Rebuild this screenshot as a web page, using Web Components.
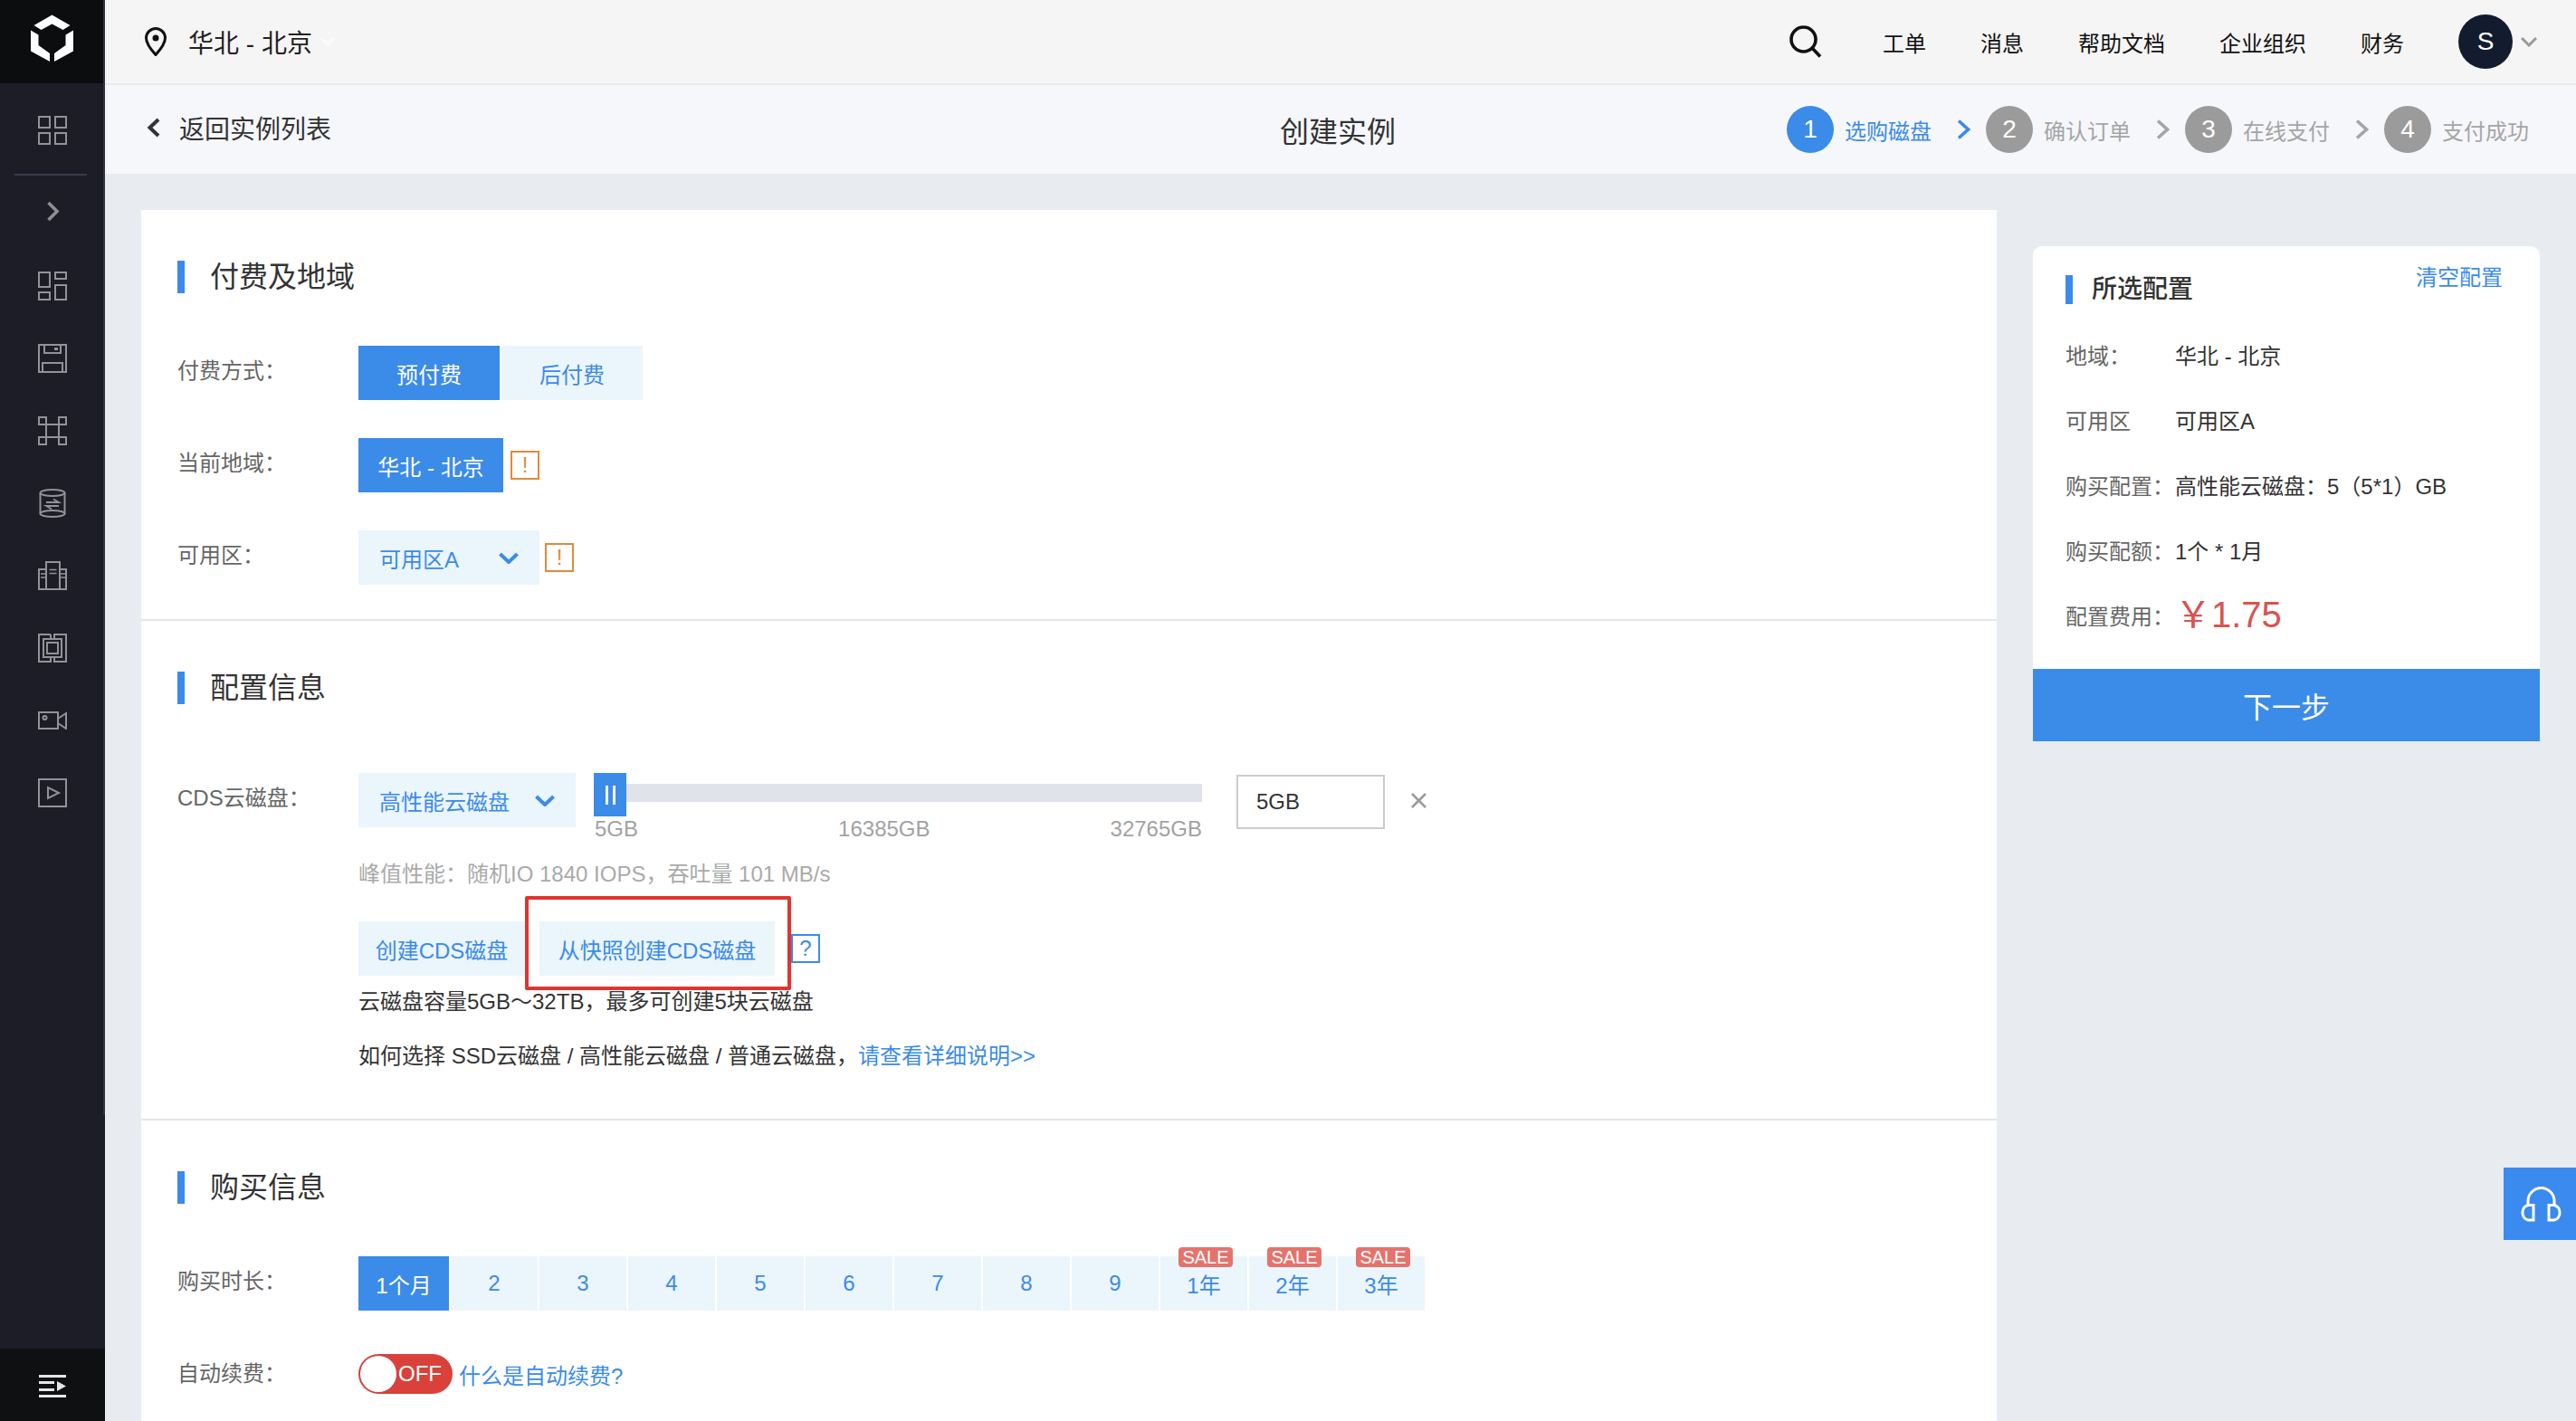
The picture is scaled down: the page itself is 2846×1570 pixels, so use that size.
<!DOCTYPE html>
<html lang="zh-CN">
<head>
<meta charset="utf-8">
<title>创建实例</title>
<style>
html,body{margin:0;padding:0;height:100%;overflow:hidden;background:#e8ebf0;}
body{font-family:"Liberation Sans","Noto Sans CJK SC",sans-serif;font-size:24px;color:#333;}
</style>
</head>
<body>
<app-shell>
  <side-bar slot="side"></side-bar>
  <top-bar slot="top"></top-bar>
  <sub-header slot="sub">
    <step-item n="1" active></step-item>
  </sub-header>
  <div slot="main" style="flex:none;width:2050px">
    <form-section heading="付费及地域" gap="58" pad="38">
      <form-row label="付费方式：">
        <seg-btn active w="156">预付费</seg-btn><seg-btn w="156" ml="2">后付费</seg-btn>
      </form-row>
      <form-row label="当前地域：" mt="42">
        <seg-btn active w="160">华北 - 北京</seg-btn><hint-box ml="8">!</hint-box>
      </form-row>
      <form-row label="可用区：" mt="42">
        <drop-select w="200">可用区A</drop-select><hint-box ml="6">!</hint-box>
      </form-row>
    </form-section>
    <form-section heading="配置信息" gap="76" pad="51" line>
      <form-row label="CDS云磁盘：">
        <disk-panel></disk-panel>
      </form-row>
    </form-section>
    <form-section heading="购买信息" gap="58" pad="60" line>
      <form-row label="购买时长：">
        <term-item active w="100">1个月</term-item>
        <term-item>2</term-item><term-item>3</term-item><term-item>4</term-item><term-item>5</term-item>
        <term-item>6</term-item><term-item>7</term-item><term-item>8</term-item><term-item>9</term-item>
        <term-item sale>1年</term-item><term-item sale>2年</term-item><term-item sale>3年</term-item>
      </form-row>
      <form-row label="自动续费：" mt="48" lh="44">
        <on-off></on-off><text-link ml="7">什么是自动续费?</text-link>
      </form-row>
    </form-section>
  </div>
  <order-summary slot="main"></order-summary>
</app-shell>
<help-float></help-float>

<script>
const BLUE='#3b8be8', PALE='#ebf5fc';
function def(name,render){
  customElements.define(name,class extends HTMLElement{
    connectedCallback(){
      if(this.shadowRoot) return;
      this.attachShadow({mode:'open'}).innerHTML=render(this);
    }
  });
}
const chev=(d,w,h,c,sw)=>`<svg width="${w}" height="${h}" viewBox="0 0 ${w} ${h}" fill="none" stroke="${c}" stroke-width="${sw}">${d}</svg>`;

def('app-shell',()=>`<style>
:host{display:flex;height:1570px;overflow:hidden}
.r{flex:1;min-width:0;display:flex;flex-direction:column}
.m{display:flex;gap:40px;padding:40px 40px 0;align-items:flex-start}
</style>
<slot name="side"></slot>
<div class="r"><slot name="top"></slot><slot name="sub"></slot><div class="m"><slot name="main"></slot></div></div>`);

const S='fill="none" stroke="#929397" stroke-width="2"';
const ic=(b,h=32)=>`<svg width="32" height="${h}" viewBox="0 0 32 ${h}" ${S}>${b}</svg>`;
def('side-bar',()=>`<style>
:host{display:flex;flex-direction:column;flex:none;width:116px;height:1570px;background:#1c1d27;position:relative}
.logo{height:92px;background:#0c0d0f;display:block;flex:none}
.it{height:80px;display:flex;align-items:center;justify-content:center;flex:none}
.first{margin-top:36px;height:32px}
.div{height:2px;margin:32px 20px 0 16px;background:#393a49;flex:none}
.ch{height:78px;margin-bottom:4px}
.sp{flex:1}
.bot{height:80px;background:#0f1012;display:flex;align-items:center;justify-content:center;flex:none;padding-top:2px;box-sizing:border-box}
.bar{position:absolute;right:0;top:0;width:2px;height:1232px;background:#32333f}
svg{display:block}
</style>
<svg class="logo" width="116" height="92" viewBox="0 0 116 92"><g fill="#fff">
<polygon points="57.5,16.5 77.5,28 69.5,33 57.5,26.5 45.5,33 37.5,28"/>
<polygon points="34,33.5 42.5,38.5 42.5,50 55,59 55,68 34,56.5"/>
<polygon points="81,33.5 72.5,38.5 72.5,50 60,59 60,68 81,56.5"/></g></svg>
<div class="it first">${ic('<rect x="1" y="1" width="12" height="12"/><rect x="19" y="1" width="12" height="12"/><rect x="1" y="19" width="12" height="12"/><rect x="19" y="19" width="12" height="12"/>')}</div>
<div class="div"></div>
<div class="it ch">${chev('<path d="M2.5 2 L12 11.5 L2.5 21"/>',15,23,'#8e8f93',3.6)}</div>
<div class="it">${ic('<rect x="1" y="1" width="12" height="16"/><rect x="19" y="1" width="12" height="7"/><rect x="1" y="23" width="12" height="8"/><rect x="19" y="15" width="12" height="16"/>')}</div>
<div class="it">${ic('<rect x="1" y="1" width="30" height="30"/><path d="M7 1V10H25V1"/><rect x="18" y="4" width="4" height="3" fill="#929397" stroke="none"/><path d="M5 31V21H27V31"/>')}</div>
<div class="it">${ic('<rect x="1" y="1" width="8" height="8"/><rect x="23" y="1" width="8" height="8"/><rect x="1" y="23" width="8" height="8"/><rect x="23" y="23" width="8" height="8"/><rect x="9" y="9" width="14" height="14"/>')}</div>
<div class="it">${ic('<ellipse cx="16" cy="4.5" rx="13.5" ry="3.5"/><ellipse cx="16" cy="27.5" rx="13.5" ry="3.5"/><path d="M2.5 4.5V27.5M29.5 4.5V27.5"/><path d="M9 15H23L17 11.5M23 19H9L15 22.5" stroke-width="1.8"/>')}</div>
<div class="it">${ic('<path d="M9 31V1H24V31ZM9 9H1V31H31V9H24"/><path d="M12.5 9.5H20.5M12.5 13.5H20.5M3 14H9M3 18H9M24 14H30M24 18H30" stroke-width="1.6"/>')}</div>
<div class="it">${ic('<path d="M14 1H1V31H14V26M18 26V31H31V1H18V6M14 1V6"/><rect x="6" y="6" width="20" height="20"/><rect x="10" y="10" width="12" height="12"/>')}</div>
<div class="it">${ic('<rect x="1" y="1" width="21" height="18"/><path d="M22 8L31 2V19L22 13"/><circle cx="7.5" cy="7" r="2"/>',20)}</div>
<div class="it">${ic('<rect x="1" y="1" width="30" height="30"/><path d="M11 10V22L23 16Z"/>')}</div>
<div class="sp"></div>
<div class="bot"><svg width="30" height="25" viewBox="0 0 30 25" fill="#e6e6e6"><rect width="30" height="3"/><rect y="7" width="17" height="3"/><rect y="15" width="17" height="3"/><rect y="22" width="30" height="3"/><polygon points="20,7 30,12.5 20,18"/></svg></div>
<div class="bar"></div>`);

def('top-bar',()=>`<style>
:host{display:flex;align-items:center;flex:none;height:92px;background:#f5f5f5;padding:0 43px 0 44px;box-sizing:border-box;color:#111;font-size:24px}
.pin{margin-right:24px;display:block}
.reg{font-size:28px;color:#222}
.fade{margin-left:9px;display:block}
.sp{flex:1}
nav{display:flex;gap:60px;margin-left:67px}
.av{width:60px;height:60px;border-radius:50%;background:#131c2e;color:#fff;font-size:28px;display:flex;align-items:center;justify-content:center;margin-left:60px}
.dn{margin-left:9px;display:block}
svg{display:block}
</style>
<svg class="pin" width="24" height="32" viewBox="0 0 24 32" fill="none" stroke="#111" stroke-width="3"><path d="M12 30.5C7 25 1.5 18.5 1.5 12A10.5 10.5 0 0 1 22.5 12C22.5 18.5 17 25 12 30.5Z"/><circle cx="12" cy="12" r="3.5" fill="#111" stroke="none"/></svg>
<span class="reg">华北 - 北京</span>
<svg class="fade" width="16" height="10" viewBox="0 0 16 10" fill="none" stroke="#fbfbfb" stroke-width="3"><path d="M1 1L8 8L15 1"/></svg>
<div class="sp"></div>
<svg width="36" height="36" viewBox="0 0 36 36" fill="none" stroke="#111" stroke-width="3.6"><circle cx="15.5" cy="15.5" r="13.5"/><path d="M25.5 25.5L34 34.5"/></svg>
<nav><span>工单</span><span>消息</span><span>帮助文档</span><span>企业组织</span><span>财务</span></nav>
<div class="av">S</div>
<svg class="dn" width="18" height="11" viewBox="0 0 18 11" fill="none" stroke="#9a9a9a" stroke-width="3"><path d="M1 1L9 9L17 1"/></svg>`);

def('step-item',h=>{
  const a=h.hasAttribute('active');
  return `<style>
:host{display:flex;align-items:center;flex:none}
.c{width:52px;height:52px;border-radius:50%;background:${a?BLUE:'#9b9b9b'};color:#fff;font-size:28px;display:flex;align-items:center;justify-content:center;margin-right:12px}
.t{color:${a?BLUE:'#a5a5a5'};font-size:24px;width:96px;white-space:nowrap}
svg{display:block;margin:0 17px 0 28px}
</style><div class="c">${h.getAttribute('n')}</div><div class="t">${h.getAttribute('t')||''}</div>${h.hasAttribute('last')?'':chev('<path d="M2 1.5L12.5 11L2 20.5"/>',15,22,a?BLUE:'#a5a5a5',3.6)}`;
});

def('sub-header',()=>`<style>
:host{display:grid;grid-template-columns:1fr auto 1fr;align-items:center;flex:none;height:98px;margin-top:2px;background:#f6f7fb;padding:0 52px 0 46px;box-sizing:border-box}
.b{display:flex;align-items:center;color:#333;font-size:28px;margin-top:-4px}
.b svg{display:block;margin-right:21px}
h1{font-size:32px;font-weight:400;margin:0;color:#333}
.s{display:flex;justify-content:flex-end}
</style>
<div class="b">${chev('<path d="M13 2L3.5 11L13 20"/>',15,22,'#333',4)}返回实例列表</div>
<h1>创建实例</h1>
<div class="s"><step-item n="1" t="选购磁盘" active></step-item><step-item n="2" t="确认订单"></step-item><step-item n="3" t="在线支付"></step-item><step-item n="4" t="支付成功" last></step-item></div>`);

def('form-section',h=>`<style>
:host{display:block;background:#fff;padding:56px 40px ${h.getAttribute('pad')}px;${h.hasAttribute('line')?'border-top:2px solid #e5e5ea;':''}}
h2{margin:0 0 ${h.getAttribute('gap')}px;font-size:32px;font-weight:400;color:#333;height:36px;line-height:36px;border-left:8px solid ${BLUE};padding-left:28px}
</style><h2>${h.getAttribute('heading')}</h2><slot></slot>`);

def('form-row',h=>`<style>
:host{display:flex;align-items:flex-start;margin-top:${h.getAttribute('mt')||0}px}
.l{flex:none;width:200px;color:#666;font-size:24px;line-height:${h.getAttribute('lh')||56}px}
.c{display:flex;align-items:center;flex:1;min-width:0}
</style><div class="l">${h.getAttribute('label')}</div><div class="c"><slot></slot></div>`);

def('seg-btn',h=>{
  const a=h.hasAttribute('active');
  return `<style>
:host{display:flex;align-items:center;justify-content:center;flex:none;box-sizing:border-box;width:${h.getAttribute('w')}px;height:60px;margin-left:${h.getAttribute('ml')||0}px;margin-right:${h.getAttribute('mr')||0}px;background:${a?BLUE:PALE};color:${a?'#fff':BLUE};font-size:24px;white-space:nowrap}
</style><slot></slot>`;
});

def('hint-box',h=>{
  const c=h.getAttribute('c')||'#e08a3c';
  return `<style>
:host{display:flex;align-items:center;justify-content:center;flex:none;box-sizing:border-box;width:32px;height:32px;margin-left:${h.getAttribute('ml')||0}px;border:2px solid ${c};color:${c};font-size:24px;line-height:1}
</style><slot></slot>`;
});

def('drop-select',h=>`<style>
:host{display:flex;align-items:center;justify-content:space-between;flex:none;box-sizing:border-box;width:${h.getAttribute('w')}px;height:60px;background:${PALE};color:${BLUE};font-size:24px;padding:0 23px 0 23px;white-space:nowrap}
svg{display:block;margin-left:10px}
</style><slot></slot>${chev('<path d="M1.5 2L11 11L20.5 2"/>',22,13,BLUE,4)}`);

def('text-link',h=>`<style>
:host{color:${BLUE};font-size:24px;margin-left:${h.getAttribute('ml')||0}px;white-space:nowrap}
</style><slot></slot>`);

def('cap-slider',()=>`<style>
:host{display:block;flex:none;width:672px;height:76px;position:relative}
.tr{height:20px;margin-top:12px;background:#e0e3e9}
.h{position:absolute;left:0;top:0;width:36px;height:48px;background:${BLUE};display:flex;align-items:flex-start;justify-content:center;gap:5px;padding-top:14px;box-sizing:border-box}
.h i{display:block;width:3px;height:21px;background:#fff}
.ls{position:absolute;left:1px;right:0;top:48px;display:flex;justify-content:space-between;color:#a2a2a2;font-size:24px;line-height:28px}
.mid{margin-left:22px}
</style><div class="tr"></div><div class="h"><i></i><i></i></div>
<div class="ls"><span>5GB</span><span class="mid">16385GB</span><span>32765GB</span></div>`);

def('disk-panel',()=>`<style>
:host{display:block;flex:1}
.a{display:flex;align-items:flex-start}
.inp{flex:none;box-sizing:border-box;width:164px;height:60px;margin:2px 0 0 38px;border:2px solid #ccc;padding-left:20px;line-height:56px;font-size:24px;color:#333}
.x{display:block;margin:22px 0 0 29px}
.hint{color:#aaa;font-size:24px;line-height:36px;margin-top:18px}
.b{display:flex;align-items:center;margin-top:34px;position:relative}
.red{position:absolute;left:184px;top:-28px;width:294px;height:104px;box-sizing:border-box;border:4px solid #e0352f;border-radius:2px;pointer-events:none}
.t{line-height:36px;font-size:24px;color:#333}
.t1{margin-top:11px}.t2{margin-top:24px}
.hb{margin-left:18px}
</style>
<div class="a"><drop-select w="240" style="margin-right:20px">高性能云磁盘</drop-select><cap-slider></cap-slider><div class="inp">5GB</div>
<svg class="x" width="17" height="17" viewBox="0 0 17 17" fill="none" stroke="#9b9b9b" stroke-width="2.6"><path d="M1 1L16 16M16 1L1 16"/></svg></div>
<div class="hint">峰值性能：随机IO 1840 IOPS，吞吐量 101 MB/s</div>
<div class="b"><seg-btn w="184" mr="16">创建CDS磁盘</seg-btn><seg-btn w="260">从快照创建CDS磁盘</seg-btn><hint-box ml="18" c="${BLUE}">?</hint-box><div class="red"></div></div>
<div class="t t1">云磁盘容量5GB～32TB，最多可创建5块云磁盘</div>
<div class="t t2">如何选择 SSD云磁盘 / 高性能云磁盘 / 普通云磁盘，<text-link>请查看详细说明&gt;&gt;</text-link></div>`);

def('term-item',h=>{
  const a=h.hasAttribute('active');
  return `<style>
:host{display:flex;align-items:center;justify-content:center;flex:none;position:relative;box-sizing:border-box;width:${h.getAttribute('w')||96}px;height:60px;margin-right:2px;background:${a?BLUE:PALE};color:${a?'#fff':BLUE};font-size:24px}
.s{position:absolute;left:20px;top:-10px;width:60px;height:22px;border-radius:4px;background:#e5736c;color:#fff;font-size:20px;line-height:22px;text-align:center}
</style><slot></slot>${h.hasAttribute('sale')?'<div class="s">SALE</div>':''}`;
});

def('on-off',()=>`<style>
:host{display:flex;align-items:center;justify-content:flex-end;flex:none;position:relative;box-sizing:border-box;width:104px;height:44px;border-radius:22px;background:#d9413a;color:#fff;font-size:24px;padding-right:12px}
i{position:absolute;left:2px;top:2px;width:40px;height:40px;border-radius:50%;background:#fff}
</style><i></i>OFF`);

def('summary-row',h=>`<style>
:host{display:flex;align-items:center;height:72px;font-size:24px;color:#333;white-space:nowrap}
.l{flex:none;width:121px;color:#666}
</style><div class="l">${h.getAttribute('label')}</div><slot></slot>`);

def('order-summary',()=>`<style>
:host{display:block;flex:none;width:560px;background:#fff;border-radius:10px 10px 0 0;margin-top:40px;position:relative;overflow:hidden}
.in{padding:32px 36px 24px}
.h{display:flex;justify-content:space-between;align-items:flex-start;margin-bottom:19px}
h3{margin:0;font-size:28px;font-weight:500;color:#333;height:32px;line-height:32px;border-left:8px solid ${BLUE};padding-left:21px}
.clr{color:${BLUE};font-size:24px;line-height:30px;margin-top:-12px;margin-right:5px}
.p{color:#d9534f;font-size:40px;line-height:72px}
.go{height:80px;background:${BLUE};color:#fff;font-size:32px;display:flex;align-items:center;justify-content:center}
</style>
<div class="in"><div class="h"><h3>所选配置</h3><span class="clr">清空配置</span></div>
<summary-row label="地域：">华北 - 北京</summary-row>
<summary-row label="可用区">可用区A</summary-row>
<summary-row label="购买配置：">高性能云磁盘：5（5*1）GB</summary-row>
<summary-row label="购买配额：">1个 * 1月</summary-row>
<summary-row label="配置费用："><span class="p">￥1.75</span></summary-row></div>
<div class="go">下一步</div>`);

def('help-float',()=>`<style>
:host{position:fixed;right:0;top:1290px;width:80px;height:80px;background:#3a8aef;display:block}
svg{display:block}
</style><svg width="80" height="80" viewBox="0 0 80 80" fill="none" stroke="#fff" stroke-width="3"><path d="M27 41V37A14.5 14.5 0 0 1 56 37V41"/><path d="M33 41.5H27A8 8.5 0 0 0 27 58H33Z"/><path d="M50 41.5H56A8 8.5 0 0 1 56 58H50Z"/></svg>`);
</script>
</body>
</html>
